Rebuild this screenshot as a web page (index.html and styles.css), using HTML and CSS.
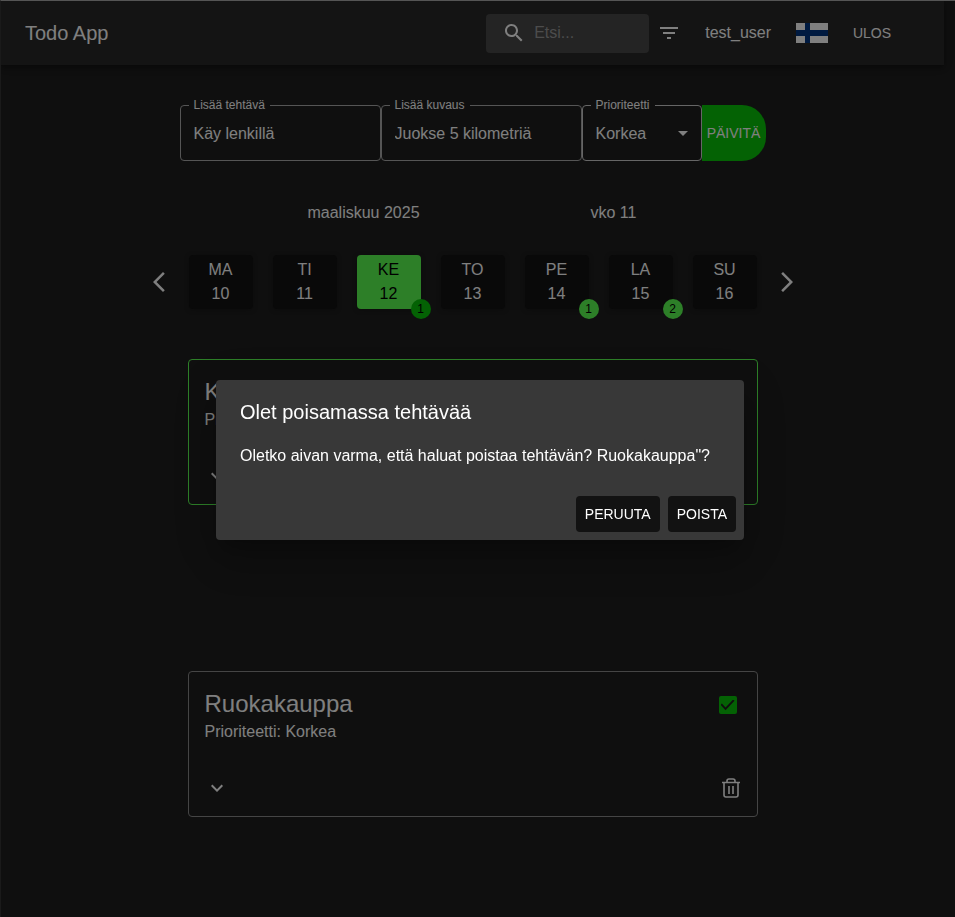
FILE: index.html
```
<!DOCTYPE html>
<html lang="fi">
<head>
<meta charset="utf-8">
<meta name="viewport" content="width=device-width, initial-scale=1">
<title>Todo App</title>
<link rel="stylesheet" href="styles.css">
</head>
<body>
<div class="app">
  <header class="bar">
    <h1 class="brand">Todo App</h1>
    <div class="search">
      <svg class="icon" viewBox="0 0 24 24" aria-hidden="true"><path d="M15.5 14h-.79l-.28-.27C15.41 12.59 16 11.11 16 9.5 16 5.91 13.09 3 9.5 3S3 5.91 3 9.5 5.91 16 9.5 16c1.61 0 3.09-.59 4.23-1.57l.27.28v.79l5 4.99L20.49 19l-4.99-5zm-6 0C7.01 14 5 11.99 5 9.5S7.01 5 9.5 5 14 7.01 14 9.5 11.99 14 9.5 14z"/></svg>
      <input class="search-input" type="text" placeholder="Etsi..." aria-label="Etsi">
    </div>
    <button class="icon-button filter" type="button" aria-label="Suodata">
      <svg class="icon" viewBox="0 0 24 24" aria-hidden="true"><path d="M10 18h4v-2h-4v2zM3 6v2h18V6H3zm3 7h12v-2H6v2z"/></svg>
    </button>
    <span class="user">test_user</span>
    <button class="icon-button flag" type="button" aria-label="Suomi">
      <svg width="32" height="20" viewBox="0 0 32 20" aria-hidden="true"><path fill="#fff" d="M0 0h32v20H0z"/><path fill="#003580" d="M9 0h5v20H9zM0 7h32v6H0z"/></svg>
    </button>
    <button class="logout" type="button">ULOS</button>
  </header>

  <main class="content">
    <form class="task-form">
      <div class="field">
        <label for="task">Lisää tehtävä</label>
        <input id="task" type="text" value="Käy lenkillä">
      </div>
      <div class="field">
        <label for="description">Lisää kuvaus</label>
        <input id="description" type="text" value="Juokse 5 kilometriä">
      </div>
      <div class="field field-select">
        <label for="priority">Prioriteetti</label>
        <select id="priority"><option>Korkea</option></select>
        <svg class="icon caret" viewBox="0 0 24 24" aria-hidden="true"><path d="m7 10 5 5 5-5z"/></svg>
      </div>
      <button class="submit" type="button">PÄIVITÄ</button>
    </form>

    <div class="period"><span>maaliskuu 2025</span><span>vko 11</span></div>

    <nav class="week" aria-label="Viikko">
      <button class="icon-button" type="button" aria-label="Edellinen viikko">
        <svg class="icon" viewBox="0 0 24 24" aria-hidden="true"><path d="M17.77 3.77 16 2 6 12l10 10 1.77-1.77L9.54 12z"/></svg>
      </button>
      <div class="days">
        <button class="day" type="button">MA<br>10</button>
        <button class="day" type="button">TI<br>11</button>
        <button class="day selected" type="button">KE<br>12<span class="badge badge-dark">1</span></button>
        <button class="day" type="button">TO<br>13</button>
        <button class="day" type="button">PE<br>14<span class="badge">1</span></button>
        <button class="day" type="button">LA<br>15<span class="badge">2</span></button>
        <button class="day" type="button">SU<br>16</button>
      </div>
      <button class="icon-button" type="button" aria-label="Seuraava viikko">
        <svg class="icon" viewBox="0 0 24 24" aria-hidden="true"><path d="M6.23 20.23 8 22l10-10L8 2 6.23 3.77 14.46 12z"/></svg>
      </button>
    </nav>

    <div class="cards">
      <article class="card active">
        <div class="card-head">
          <div><h2>Käy lenkillä</h2><p>Prioriteetti: Korkea</p></div>
          <input class="check" type="checkbox" aria-label="Käy lenkillä tehty">
        </div>
        <div class="card-actions">
          <button class="icon-button" type="button" aria-label="Näytä lisää"><svg class="icon" viewBox="0 0 24 24" aria-hidden="true"><path d="M16.59 8.59 12 13.17 7.41 8.59 6 10l6 6 6-6z"/></svg></button>
        </div>
      </article>
      <article class="card">
        <div class="card-head">
          <div><h2>Ruokakauppa</h2><p>Prioriteetti: Korkea</p></div>
          <input class="check" type="checkbox" aria-label="Ruokakauppa tehty" checked>
        </div>
        <div class="card-actions">
          <button class="icon-button" type="button" aria-label="Näytä lisää"><svg class="icon" viewBox="0 0 24 24" aria-hidden="true"><path d="M16.59 8.59 12 13.17 7.41 8.59 6 10l6 6 6-6z"/></svg></button>
          <button class="icon-button" type="button" aria-label="Poista tehtävä"><svg class="icon outline" viewBox="0 0 24 24" aria-hidden="true"><path d="M5 6.500h18M10 6V5q0-2 2-2h4q2 0 2 2v1M7 7v12q0 2 2 2h10q2 0 2-2V7M12 10v8M16 10v8"/></svg></button>
        </div>
      </article>
    </div>
  </main>
</div>

<div class="backdrop">
  <section class="dialog" role="dialog" aria-modal="true" aria-labelledby="dialog-title">
    <h2 id="dialog-title">Olet poisamassa tehtävää</h2>
    <p>Oletko aivan varma, että haluat poistaa tehtävän? Ruokakauppa"?</p>
    <div class="dialog-actions">
      <button type="button">PERUUTA</button>
      <button type="button">POISTA</button>
    </div>
  </section>
</div>
</body>
</html>
```
FILE: styles.css
```
* { box-sizing: border-box; }

body {
  margin: 0;
  min-height: 100vh;
  background: #1e1e1e;
  border-top: 1px solid #aaa;
  border-left: 1px solid #343434;
  color: #fff;
  font: 16px/24px "Liberation Sans", Arial, sans-serif;
}

h1, h2, p { margin: 0; font-weight: 400; }

button, input, select { font: inherit; color: inherit; }

button {
  border: 0;
  padding: 0;
  background: none;
  cursor: pointer;
}

.icon { display: block; width: 24px; height: 24px; fill: currentColor; overflow: visible; }
.outline { fill: none; stroke: currentColor; stroke-width: 1.6; }
.icon-button { display: flex; flex: none; }

.app { margin-right: 11px; }

.bar {
  display: flex;
  align-items: center;
  height: 64px;
  padding: 0 40px 0 24px;
  background: #292929;
  box-shadow: 0 2px 4px -1px rgba(0, 0, 0, .2), 0 4px 5px rgba(0, 0, 0, .14), 0 1px 10px rgba(0, 0, 0, .12);
}

.brand { flex: 1; font-size: 20px; line-height: 32px; }

.search {
  display: flex;
  align-items: center;
  width: 163px;
  height: 39px;
  padding-left: 16px;
  gap: 8px;
  border-radius: 4px;
  background: #484848;
}

.search .icon { flex: none; }

.search-input {
  flex: 1;
  min-width: 0;
  padding: 0;
  border: 0;
  outline: 0;
  background: none;
}

.search-input::placeholder { color: #999; opacity: 1; }

.filter { margin: 0 24px 0 8px; }
.flag { margin: 0 12px 0 25px; }
.logout { min-width: 64px; font-size: 14px; }

.content {
  display: flex;
  flex-direction: column;
  align-items: center;
  padding-top: 40px;
}

.task-form { display: flex; width: 100%; max-width: 586px; }

.field { position: relative; flex: 1; height: 56px; }

.field label {
  position: absolute;
  top: -7px;
  left: 9px;
  padding: 0 5px;
  background: #1e1e1e;
  font-size: 12px;
  line-height: 14px;
}

.field input, .field select {
  width: 100%;
  height: 100%;
  padding: 2px 13px 0;
  border: 1px solid #aaa;
  border-radius: 4px;
  background: none;
  appearance: none;
}

.field-select { flex: 0 0 120px; }
.field-select select { border-color: #ccc; }
.caret { position: absolute; top: 16px; right: 7px; pointer-events: none; }

.submit {
  width: 64px;
  border-radius: 0 24px 24px 0;
  background: #08c408;
  font-size: 14px;
}

.period {
  display: grid;
  grid-template-columns: 250px 250px;
  margin: 40px 0 0 32px;
  text-align: center;
}

.week { display: flex; align-items: center; gap: 18px; margin-top: 30px; }
.days { display: flex; gap: 20px; }

.day {
  position: relative;
  width: 64px;
  padding: 3px 0;
  border-radius: 4px;
  background: #121212;
  box-shadow: 0 1px 5px rgba(0, 0, 0, .25);
}

.selected { background: #5aff50; color: #000; }

.badge {
  position: absolute;
  right: -10px;
  bottom: -10px;
  width: 20px;
  height: 20px;
  border-radius: 50%;
  background: #5aff50;
  color: #000;
  font-size: 12px;
  line-height: 20px;
}

.badge-dark { background: #08c408; }

.cards {
  display: grid;
  gap: 166px;
  width: 100%;
  max-width: 570px;
  margin-top: 50px;
}

.card {
  padding: 16px;
  border: 1px solid #8a8a8a;
  border-radius: 4px;
}

.active { border-color: #5aff50; }

.card-head, .card-actions { display: flex; justify-content: space-between; }
.card h2 { font-size: 24px; line-height: 32px; }
.card-actions { margin-top: 32px; }

.check {
  display: grid;
  place-items: center;
  width: 18px;
  height: 18px;
  margin: 8px 4px 0 0;
  border: 2px solid #08c408;
  border-radius: 2px;
  appearance: none;
}

.check:checked { background: #08c408; }

.check:checked::after {
  content: "";
  width: 14px;
  height: 11px;
  background: #1e1e1e;
  clip-path: polygon(0 48%, 10% 36%, 36% 72%, 90% 0, 100% 12%, 36% 98%);
}

.backdrop {
  position: fixed;
  inset: 0;
  display: grid;
  place-items: center;
  padding: 3px 0 0 5px;
  background: rgba(0, 0, 0, .5);
}

.dialog {
  width: 100%;
  max-width: 528px;
  border-radius: 4px;
  background: #383838;
  box-shadow: 0 11px 15px -7px rgba(0, 0, 0, .2), 0 24px 38px 3px rgba(0, 0, 0, .14), 0 9px 46px 8px rgba(0, 0, 0, .12);
}

.dialog h2 { padding: 16px 24px; font-size: 20px; line-height: 32px; }
.dialog p { padding: 0 24px 20px; }

.dialog-actions {
  display: flex;
  justify-content: flex-end;
  gap: 8px;
  padding: 8px;
}

.dialog-actions button {
  height: 36px;
  padding: 0 9px;
  border-radius: 4px;
  background: #121212;
  font-size: 14px;
}
```
